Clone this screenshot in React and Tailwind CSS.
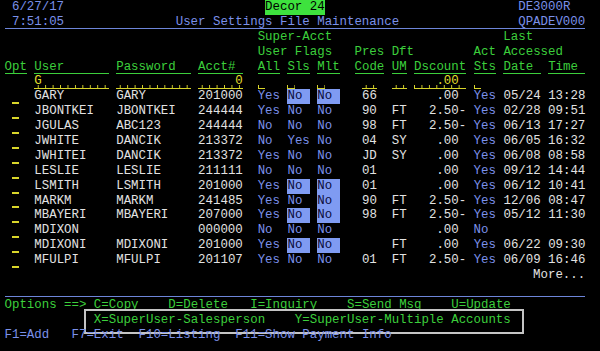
import React from "react";

const green = "text-[#3ccf3c]";
const blue = "text-[#7b91ea]";
const white = "text-[#e2e2e2]";
const yellow = "text-[#e2df2c]";
const ulGreen = "inline-block h-[14px] align-top border-b border-[#3ccf3c] text-[#3ccf3c]";
const ulBlue = "inline-block h-[14px] align-top border-b border-[#6d85d9] text-[#7b91ea]";
const field =
  "inline-block h-[14.5px] align-top border-b border-[#d8d52a] text-[#e2df2c] bg-[linear-gradient(to_right,#d8d52a_1px,transparent_1px)] bg-[length:7.453px_3px] bg-bottom bg-repeat-x";
const dash = "inline-block h-[14.9px] align-top border-b-2 border-[#d8d52a]";
const hl = "inline-block h-[14.9px] align-top bg-[#7f9bf2] text-[#0c0c3a]";
const decor = "inline-block h-[14.9px] align-top bg-[#3ee23e] text-black";

function Row({ segs, className = "" }) {
  const out = [];
  let pos = 0;
  segs.forEach(([c, t, cls], i) => {
    if (!t) return;
    if (c > pos) out.push(" ".repeat(c - pos));
    out.push(
      <span key={i} className={cls}>
        {t}
      </span>
    );
    pos = c + t.length;
  });
  return (
    <div className={"h-[14.9px] leading-[14.9px] whitespace-pre " + className}>
      {out}
    </div>
  );
}

const data = [
  ["GARY", "GARY", "201000", "Yes", "No", "No", "66", "", ".00", "Yes", "05/24", "13:28", true, true],
  ["JBONTKEI", "JBONTKEI", "244444", "Yes", "No", "No", "90", "FT", "2.50-", "Yes", "02/28", "09:51", false, false],
  ["JGULAS", "ABC123", "244444", "No", "No", "No", "98", "FT", "2.50-", "Yes", "06/13", "17:27", false, false],
  ["JWHITE", "DANCIK", "213372", "No", "Yes", "No", "04", "SY", ".00", "Yes", "06/05", "16:32", false, false],
  ["JWHITEI", "DANCIK", "213372", "Yes", "No", "No", "JD", "SY", ".00", "Yes", "06/08", "08:58", false, false],
  ["LESLIE", "LESLIE", "211111", "No", "No", "No", "01", "", ".00", "Yes", "09/12", "14:44", false, false],
  ["LSMITH", "LSMITH", "201000", "Yes", "No", "No", "01", "", ".00", "Yes", "06/12", "10:41", true, true],
  ["MARKM", "MARKM", "241485", "Yes", "No", "No", "90", "FT", "2.50-", "Yes", "12/06", "08:47", false, true],
  ["MBAYERI", "MBAYERI", "207000", "Yes", "No", "No", "98", "FT", "2.50-", "Yes", "05/12", "11:30", true, true],
  ["MDIXON", "", "000000", "No", "No", "No", "", "", ".00", "No", "", "", false, false],
  ["MDIXONI", "MDIXONI", "201000", "Yes", "No", "No", "", "FT", ".00", "Yes", "06/22", "09:30", true, true],
  ["MFULPI", "MFULPI", "201107", "Yes", "No", "No", "01", "FT", "2.50-", "Yes", "06/09", "16:46", false, false],
];

export default function App() {
  return (
    <div className="relative w-[600px] h-[351px] overflow-hidden bg-black pl-[4.5px] font-['Liberation_Mono',monospace] text-[12.42px]">
      <Row
        segs={[
          [1, "6/27/17", blue],
          [35, "Decor 24", decor],
          [69, "DE3000R", blue],
        ]}
      />
      <Row
        segs={[
          [
            0,
            " 7:51:05               User Settings File Maintenance                QPADEV000",
            ulBlue,
          ],
        ]}
      />
      <Row
        segs={[
          [34, "Super-Acct", green],
          [67, "Last", green],
        ]}
      />
      <Row
        segs={[
          [34, "User Flags", green],
          [47, "Pres", green],
          [52, "Dft", green],
          [63, "Act", green],
          [67, "Accessed", green],
        ]}
      />
      <Row
        segs={[
          [0, "Opt", ulGreen],
          [4, "User      ", ulGreen],
          [15, "Password  ", ulGreen],
          [26, "Acct# ", ulGreen],
          [34, "All", ulGreen],
          [38, "Sls", ulGreen],
          [42, "Mlt", ulGreen],
          [47, "Code", ulGreen],
          [52, "UM", ulGreen],
          [55, "Dscount", ulGreen],
          [63, "Sts", ulGreen],
          [67, "Date ", ulGreen],
          [73, "Time ", ulGreen],
        ]}
      />
      <Row
        segs={[
          [4, "G         ", field],
          [15, "          ", field],
          [26, "     0", field],
          [34, " ", field],
          [38, " ", field],
          [42, " ", field],
          [48, "  ", field],
          [52, "  ", field],
          [55, "   .00 ", field],
          [63, " ", field],
        ]}
      />
      {data.map((r, i) => {
        const [user, pw, acct, all, sls, mlt, code, um, d, act, date, time, hs, hm] = r;
        return (
          <Row
            key={i}
            segs={[
              [1, " ", dash],
              [4, user, white],
              [15, pw, white],
              [26, acct, white],
              [34, all, blue],
              hs ? [38, "No ", hl] : [38, sls, blue],
              hm ? [42, "No ", hl] : [42, mlt, blue],
              [48, code, white],
              [52, um, white],
              [d === ".00" ? 58 : 57, d, white],
              [63, act, blue],
              [67, date, white],
              [73, time, white],
            ]}
          />
        );
      })}
      <Row segs={[[71, "More...", white]]} />
      <Row segs={[[0, " ".repeat(78), ulBlue]]} />
      <Row
        segs={[
          [0, "Options ==>", green],
          [12, "C=Copy", green],
          [22, "D=Delete", green],
          [33, "I=Inquiry", green],
          [46, "S=Send Msg", green],
          [60, "U=Update", green],
        ]}
      />
      <Row
        className="relative z-10"
        segs={[
          [12, "X=SuperUser-Salesperson", green],
          [39, "Y=SuperUser-Multiple Accounts", green],
        ]}
      />
      <Row
        className="relative z-10"
        segs={[
          [0, "F1=Add", blue],
          [9, "F7=Exit", blue],
          [18, "F10=Listing", blue],
          [31, "F11=Show Payment Info", blue],
        ]}
      />
      <div className="absolute left-[84px] top-[308.5px] w-[440px] h-[25px] border-2 border-[#c4c4c4] bg-black" />
    </div>
  );
}
